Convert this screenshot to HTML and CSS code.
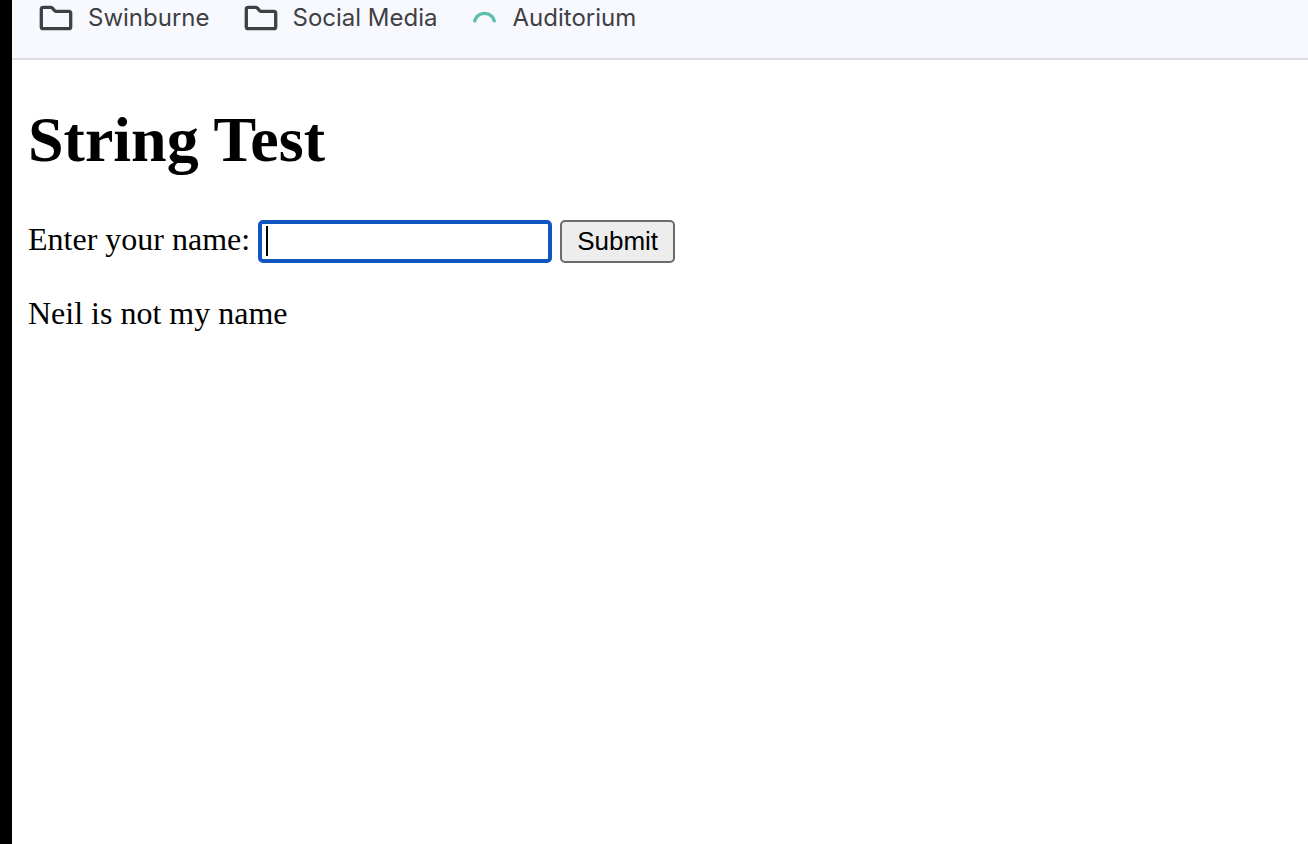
FILE: index.html
```html
<!DOCTYPE html>
<html lang="en">
<head>
<meta charset="utf-8">
<title>String Test</title>
<link rel="stylesheet" href="styles.css">
</head>
<body>
<nav class="bookmarks" aria-label="Bookmarks">
  <a class="bookmark" href="#">
    <svg class="icon" width="34" height="26" viewBox="0 0 34 26" aria-hidden="true"><path d="M4 2.3H11.5Q12.5 2.3 13.2 3L15.6 5.6Q16.3 6.3 17.3 6.3H29.7Q31.7 6.3 31.7 8.3V21.7Q31.7 23.7 29.7 23.7H4.3Q2.3 23.7 2.3 21.7V4.3Q2.3 2.3 4.3 2.3Z"/></svg>
    <span>Swinburne</span>
  </a>
  <a class="bookmark" href="#">
    <svg class="icon" width="34" height="26" viewBox="0 0 34 26" aria-hidden="true"><path d="M4 2.3H11.5Q12.5 2.3 13.2 3L15.6 5.6Q16.3 6.3 17.3 6.3H29.7Q31.7 6.3 31.7 8.3V21.7Q31.7 23.7 29.7 23.7H4.3Q2.3 23.7 2.3 21.7V4.3Q2.3 2.3 4.3 2.3Z"/></svg>
    <span>Social Media</span>
  </a>
  <a class="bookmark" href="#">
    <svg class="icon arc" width="26" height="26" viewBox="0 0 26 26" aria-hidden="true"><path d="M2.7 17.2A9.8 8.9 0 0 1 22.3 17.2"/></svg>
    <span>Auditorium</span>
  </a>
</nav>
<main class="page">
  <h1 class="title">String Test</h1>
  <form class="name-form">
    <label for="name">Enter your name:</label>
    <span class="field"><input class="name-input" id="name" type="text"><span class="caret"></span></span>
    <button class="submit" type="button">Submit</button>
  </form>
  <p class="result">Neil is not my name</p>
</main>
</body>
</html>
```

FILE: styles.css
```css
* {
  box-sizing: border-box;
}

body {
  margin: 0;
  min-height: 100vh;
  border-left: 12px solid #000;
  background: #fff;
  color: #000;
  font: 32px/36px "Liberation Serif", "Times New Roman", serif;
}

.bookmarks {
  display: flex;
  gap: 34px;
  height: 60px;
  padding: 3px 27px 0;
  border-bottom: 2px solid #dadce6;
  background: #f8f9ff;
  font: 24px/30px Inter, sans-serif;
}

.bookmark {
  display: flex;
  align-items: center;
  gap: 15px;
  height: 30px;
  color: #3f4044;
  text-decoration: none;
}

.icon {
  flex: none;
  fill: none;
  stroke: #3f4044;
  stroke-width: 3.3;
}

.arc {
  stroke: #5bbfad;
}

.page {
  padding: 43px 16px;
}

.title {
  margin: 0 0 43px;
  font-size: 64px;
  line-height: 74px;
}

.name-form {
  display: flex;
  align-items: baseline;
  gap: 8px;
}

.field {
  position: relative;
  display: flex;
}

.name-input {
  width: 294px;
  height: 43px;
  padding: 2px 6px;
  border: 4px solid #1056c0;
  border-radius: 5px;
  outline: none;
  background: #fff;
  font: 26px "Liberation Sans", Arial, sans-serif;
}

.caret {
  position: absolute;
  top: 6px;
  left: 8px;
  width: 2px;
  height: 30px;
  background: #000;
}

.submit {
  height: 43px;
  padding: 0 15px;
  border: 2px solid #6b6b6b;
  border-radius: 5px;
  background: #ededed;
  color: #000;
  font: 26px "Liberation Sans", Arial, sans-serif;
}

.result {
  margin: 32px 0 0;
}
```
